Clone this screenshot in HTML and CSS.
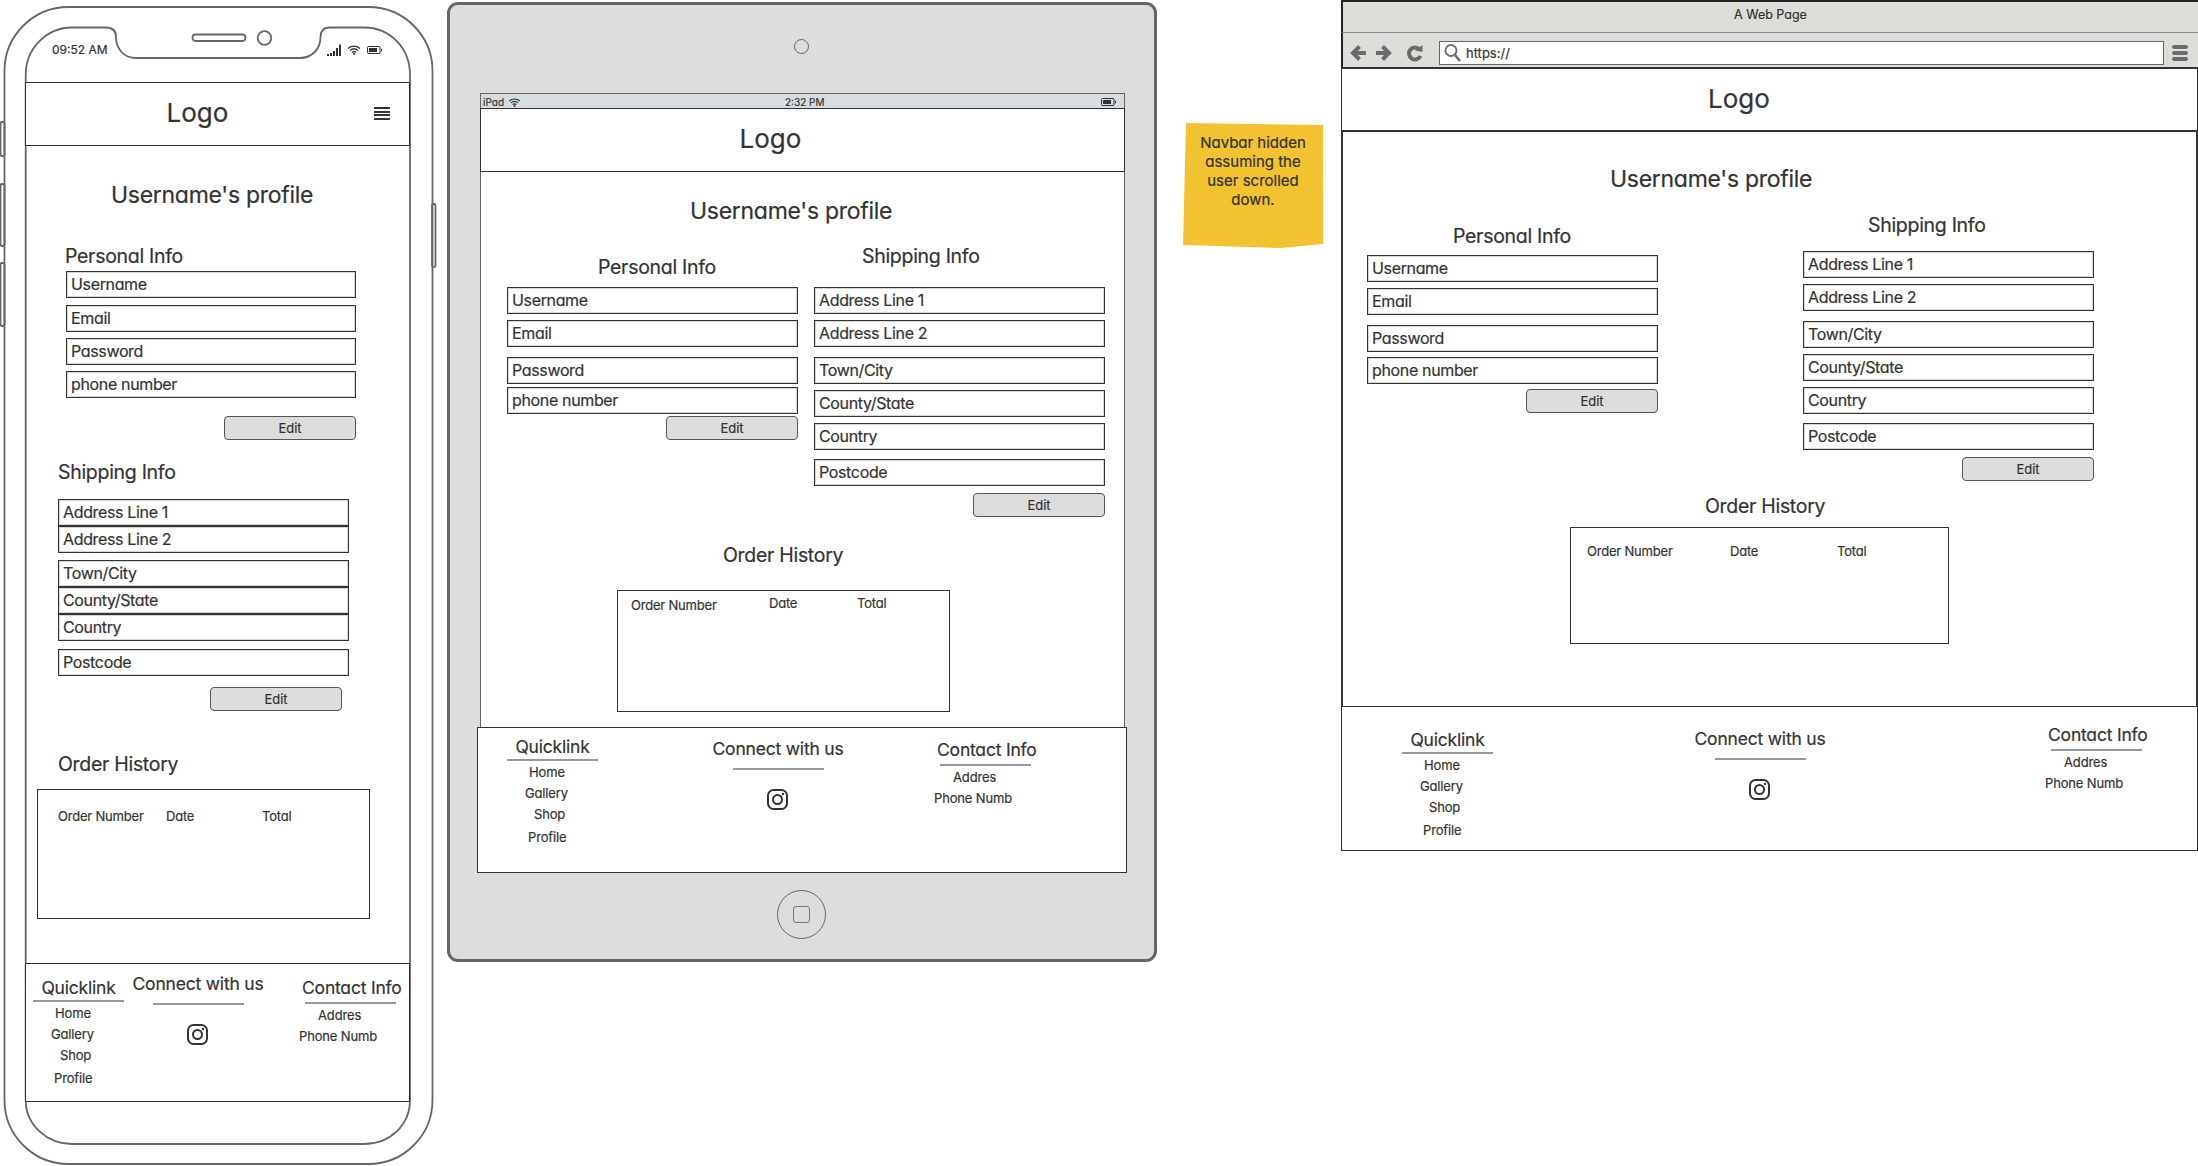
FILE: index.html
```html
<!doctype html>
<html>
  <head>
    <meta charset="utf-8">
    <title>Profile page wireframes</title>
    <link rel="stylesheet" href="styles.css">
  </head>
  <body>
    <svg class="icon-defs" aria-hidden="true">
      <symbol id="insta" viewBox="0 0 21 21">
        <rect x="1" y="1" width="19" height="19" rx="5.5" fill="none" stroke="#333" stroke-width="2"/>
        <circle cx="10.5" cy="10.5" r="4.5" fill="none" stroke="#333" stroke-width="2"/>
        <circle cx="16" cy="5" r="1.2" fill="#333"/>
      </symbol>
      <symbol id="wifi" viewBox="0 0 14 10">
        <path d="M1 3.4C4.5 0.4 9.5 0.4 13 3.4M3 5.4C5.4 3.4 8.6 3.4 11 5.4M5 7.4C6.2 6.4 7.8 6.4 9 7.4" fill="none" stroke="#333" stroke-width="1.3"/>
        <circle cx="7" cy="8.8" r="1.1" fill="#333"/>
      </symbol>
      <symbol id="battery" viewBox="0 0 15 8">
        <rect x="0.5" y="0.5" width="12.5" height="7" rx="1" fill="none" stroke="#333"/>
        <rect x="2" y="2" width="8" height="4" fill="#333"/>
        <path d="M14 2.5C14.8 3 14.8 5 14 5.5" fill="none" stroke="#333"/>
      </symbol>
    </svg>

    <!-- phone -->
    <section class="device phone">
      <svg class="shell" width="440" height="1166" viewBox="0 0 440 1166">
        <rect x="0.5" y="122" width="4" height="34" rx="1.5" class="shell-line"/>
        <rect x="0.5" y="184" width="4" height="62" rx="1.5" class="shell-line"/>
        <rect x="0.5" y="263" width="4" height="63" rx="1.5" class="shell-line"/>
        <rect x="432" y="204" width="3.5" height="63" rx="1.5" class="shell-line"/>
        <rect x="4.5" y="7" width="428" height="1157" rx="64" class="shell-line"/>
        <path class="shell-line" d="M25.7 1100V75C25.7 48 47 27.5 72 27.5H106C113 27.5 116 31 116 37C116 49 124 58 136 58H300C312 58 320.5 49 320.5 37C320.5 31 323 27.5 330 27.5H364C390 27.5 410 48 410 75V1100C410 1125 390 1144 364 1144H72C47 1144 25.7 1125 25.7 1100Z"/>
        <rect x="192.5" y="34.5" width="53" height="6.5" rx="3.2" class="shell-line"/>
        <circle cx="264.5" cy="38" r="6.8" class="shell-line"/>
        <g fill="#333">
          <rect x="327" y="54" width="2" height="2"/>
          <rect x="330" y="53" width="2" height="3"/>
          <rect x="333" y="51" width="2" height="5"/>
          <rect x="336" y="48" width="2" height="8"/>
          <rect x="339" y="44.500" width="2" height="11.500"/>
        </g>
      </svg>
      <span class="status-time">09:52 AM</span>
      <svg class="status-wifi"><use href="#wifi"/></svg>
      <svg class="status-battery"><use href="#battery"/></svg>

      <header class="nav">
        <span class="logo">Logo</span>
        <span class="burger"><i></i><i></i><i></i><i></i></span>
      </header>

      <h2 class="title">Username's profile</h2>
      <h3 class="heading personal-title">Personal Info</h3>
      <div class="fields personal">
        <div class="field">Username</div>
        <div class="field gap-7">Email</div>
        <div class="field gap-6">Password</div>
        <div class="field gap-6">phone number</div>
        <button class="edit gap-18">Edit</button>
      </div>

      <h3 class="heading shipping-title">Shipping Info</h3>
      <div class="fields shipping">
        <div class="field">Address Line 1</div>
        <div class="field">Address Line 2</div>
        <div class="field gap-7">Town/City</div>
        <div class="field">County/State</div>
        <div class="field">Country</div>
        <div class="field gap-8">Postcode</div>
        <button class="edit edit-inset gap-11">Edit</button>
      </div>

      <h3 class="heading orders-title">Order History</h3>
      <div class="orders">
        <span>Order Number</span><span>Date</span><span>Total</span>
      </div>

      <footer class="foot">
        <div class="quick">
          <h4 class="foot-head">Quicklink</h4>
          <ul class="links"><li>Home</li><li>Gallery</li><li>Shop</li><li>Profile</li></ul>
        </div>
        <div class="connect">
          <h4>Connect with us</h4>
          <i class="rule"></i>
          <svg class="insta"><use href="#insta"/></svg>
        </div>
        <div class="contact">
          <h4 class="foot-head">Contact Info</h4>
          <p class="addr">Addres</p>
          <p class="tel">Phone Numb</p>
        </div>
      </footer>
    </section>

    <!-- tablet -->
    <section class="device tablet">
      <div class="tablet-body"></div>
      <i class="tablet-cam"></i>
      <div class="tablet-screen"></div>
      <div class="tablet-status">
        <span>iPad</span>
        <svg class="tablet-wifi"><use href="#wifi"/></svg>
        <span class="tablet-clock">2:32 PM</span>
        <svg class="tablet-battery"><use href="#battery"/></svg>
      </div>
      <i class="tablet-home"><i></i></i>

      <header class="nav">
        <span class="logo">Logo</span>
      </header>

      <h2 class="title">Username's profile</h2>
      <h3 class="heading personal-title">Personal Info</h3>
      <div class="fields personal">
        <div class="field">Username</div>
        <div class="field gap-6">Email</div>
        <div class="field gap-10">Password</div>
        <div class="field gap-3">phone number</div>
        <button class="edit gap-2">Edit</button>
      </div>

      <h3 class="heading shipping-title">Shipping Info</h3>
      <div class="fields shipping">
        <div class="field">Address Line 1</div>
        <div class="field gap-6">Address Line 2</div>
        <div class="field gap-10">Town/City</div>
        <div class="field gap-6">County/State</div>
        <div class="field gap-6">Country</div>
        <div class="field gap-9">Postcode</div>
        <button class="edit gap-7">Edit</button>
      </div>

      <h3 class="heading orders-title">Order History</h3>
      <div class="orders">
        <span>Order Number</span><span>Date</span><span>Total</span>
      </div>

      <footer class="foot">
        <div class="quick">
          <h4 class="foot-head">Quicklink</h4>
          <ul class="links"><li>Home</li><li>Gallery</li><li>Shop</li><li>Profile</li></ul>
        </div>
        <div class="connect">
          <h4>Connect with us</h4>
          <i class="rule"></i>
          <svg class="insta"><use href="#insta"/></svg>
        </div>
        <div class="contact">
          <h4 class="foot-head">Contact Info</h4>
          <p class="addr">Addres</p>
          <p class="tel">Phone Numb</p>
        </div>
      </footer>
    </section>

    <!-- sticky note -->
    <aside class="sticky">
      <p>Navbar hidden assuming the user scrolled down.</p>
    </aside>

    <!-- browser -->
    <section class="device browser">
      <div class="win-title">A Web Page</div>
      <div class="win-bar">
        <svg class="win-nav" width="74" height="18" viewBox="0 0 74 18">
          <g fill="none" stroke="#6b6b6b" stroke-width="4">
            <path d="M16 9H3M9.500 2.500L3 9L9.500 15.500"/>
            <path d="M26 9H39M32.500 2.500L39 9L32.500 15.500"/>
            <path d="M69.500 5.500A6 6 0 1 0 70.500 12"/>
          </g>
          <path d="M65 6.500L72.500 1V8Z" fill="#6b6b6b"/>
        </svg>
        <div class="win-url">
          <svg class="win-search" width="18" height="20" viewBox="0 0 18 20">
            <circle cx="7" cy="7.500" r="5.500" fill="none" stroke="#6b6b6b" stroke-width="1.800"/>
            <path d="M11 12L16 18" stroke="#6b6b6b" stroke-width="2.600"/>
          </svg>
          <span>https://</span>
        </div>
        <span class="win-menu"><i></i><i></i><i></i></span>
      </div>

      <header class="nav">
        <span class="logo">Logo</span>
      </header>
      <div class="page"></div>

      <h2 class="title">Username's profile</h2>
      <h3 class="heading personal-title">Personal Info</h3>
      <div class="fields personal">
        <div class="field">Username</div>
        <div class="field gap-6">Email</div>
        <div class="field gap-10">Password</div>
        <div class="field gap-5">phone number</div>
        <button class="edit gap-5">Edit</button>
      </div>

      <h3 class="heading shipping-title">Shipping Info</h3>
      <div class="fields shipping">
        <div class="field">Address Line 1</div>
        <div class="field gap-6">Address Line 2</div>
        <div class="field gap-10">Town/City</div>
        <div class="field gap-6">County/State</div>
        <div class="field gap-6">Country</div>
        <div class="field gap-9">Postcode</div>
        <button class="edit gap-7">Edit</button>
      </div>

      <h3 class="heading orders-title">Order History</h3>
      <div class="orders">
        <span>Order Number</span><span>Date</span><span>Total</span>
      </div>

      <footer class="foot">
        <div class="quick">
          <h4 class="foot-head">Quicklink</h4>
          <ul class="links"><li>Home</li><li>Gallery</li><li>Shop</li><li>Profile</li></ul>
        </div>
        <div class="connect">
          <h4>Connect with us</h4>
          <i class="rule"></i>
          <svg class="insta"><use href="#insta"/></svg>
        </div>
        <div class="contact">
          <h4 class="foot-head">Contact Info</h4>
          <p class="addr">Addres</p>
          <p class="tel">Phone Numb</p>
        </div>
      </footer>
    </section>
  </body>
</html>
```

FILE: styles.css
```css
html, body {
  margin: 0;
  padding: 0;
}
body {
  position: relative;
  width: 2198px;
  height: 1166px;
  overflow: hidden;
  background: #fff;
  color: #333;
  font-family: "Inter", "Noto Sans", sans-serif;
  font-feature-settings: "cv11";
  -webkit-text-stroke: 0.2px #333;
}
h2, h3, h4, p, ul {
  margin: 0;
  padding: 0;
  font-weight: 400;
}
ul {
  list-style: none;
}
i {
  display: block;
}
.icon-defs {
  position: absolute;
  width: 0;
  height: 0;
}

/* each device sits on the free canvas, widgets are placed inside it */
.device {
  position: absolute;
  top: 0;
  height: 1166px;
}
.phone { left: 0; width: 440px; }
.tablet { left: 440px; width: 740px; }
.browser { left: 1330px; width: 868px; }

/* shared widgets */
.nav {
  position: absolute;
  box-sizing: border-box;
  display: flex;
  align-items: center;
  justify-content: center;
  border: 1px solid #333;
  background: #fff;
}
.logo {
  font-size: 26px;
  line-height: 32px;
  margin-top: -2px;
}
.title, .heading {
  position: absolute;
  white-space: nowrap;
  line-height: 24px;
}
.title {
  font-size: 23px;
  letter-spacing: -0.28px;
}
.heading {
  font-size: 19.5px;
  letter-spacing: -0.3px;
}
.fields {
  position: absolute;
  width: 291px;
  display: flex;
  flex-direction: column;
}
.field {
  box-sizing: border-box;
  height: 27px;
  padding-left: 4px;
  border: 1px solid #333;
  box-shadow: inset 0 0 0 1px rgba(51, 51, 51, 0.2);
  background: #fff;
  font-size: 16px;
  letter-spacing: -0.35px;
  line-height: 24px;
}
.edit {
  align-self: flex-end;
  box-sizing: border-box;
  width: 132px;
  height: 24px;
  padding: 0;
  border: 1px solid #555;
  border-radius: 4px;
  background: #ddd;
  color: #333;
  font-family: inherit;
  font-feature-settings: inherit;
  font-size: 13px;
}
.edit-inset { margin-right: 7px; }
.gap-2 { margin-top: 2px; }
.gap-3 { margin-top: 3px; }
.gap-5 { margin-top: 5px; }
.gap-6 { margin-top: 6px; }
.gap-7 { margin-top: 7px; }
.gap-8 { margin-top: 8px; }
.gap-9 { margin-top: 9px; }
.gap-10 { margin-top: 10px; }
.gap-11 { margin-top: 11px; }
.gap-18 { margin-top: 18px; }

.orders {
  position: absolute;
  box-sizing: border-box;
  display: flex;
  border: 1px solid #333;
  background: #fff;
  font-size: 13px;
  letter-spacing: -0.2px;
  line-height: 18px;
}

.foot {
  position: absolute;
  box-sizing: border-box;
  border: 1px solid #333;
  background: #fff;
  font-size: 13px;
  letter-spacing: -0.15px;
  line-height: 20px;
}
.quick, .connect, .contact {
  position: absolute;
  width: 91px;
}
.foot h4 {
  box-sizing: border-box;
  font-size: 17.5px;
  letter-spacing: -0.2px;
  line-height: 24px;
  white-space: nowrap;
}
.quick .foot-head {
  height: 26px;
  border-bottom: 2px solid #999;
  text-align: center;
}
.contact .foot-head {
  height: 28px;
  padding: 0 0 4px 0;
  border-bottom: 2px solid #999;
  text-indent: -3px;
}
.links {
  margin-top: 1px;
  white-space: nowrap;
}
.links li:nth-child(1) { margin-left: 22px; }
.links li:nth-child(2) { margin-left: 18px; margin-top: 1px; }
.links li:nth-child(3) { margin-left: 27px; margin-top: 1px; }
.links li:nth-child(4) { margin-left: 21px; margin-top: 3px; }
.connect {
  width: 130px;
  display: flex;
  flex-direction: column;
  align-items: center;
}
.rule {
  width: 91px;
  height: 2px;
  margin-top: 7px;
  background: #999;
}
.insta {
  width: 21px;
  height: 21px;
  margin-top: 19px;
  margin-right: 1px;
}
.addr {
  margin: 1px 0 0 13px;
  white-space: nowrap;
}
.tel {
  margin: 1px 0 0 -6px;
  white-space: nowrap;
}

/* phone */
.shell {
  position: absolute;
  left: 0;
  top: 0;
}
.shell-line {
  fill: none;
  stroke: #666;
  stroke-width: 1.8;
}
.status-time {
  position: absolute;
  left: 52px;
  top: 40px;
  font-size: 12px;
  line-height: 20px;
}
.status-wifi {
  position: absolute;
  left: 347px;
  top: 45px;
  width: 14px;
  height: 10px;
}
.status-battery {
  position: absolute;
  left: 367px;
  top: 46px;
  width: 15px;
  height: 8px;
}
.phone .nav { left: 25px; top: 82px; width: 385px; height: 64px; padding-right: 40px; }
.burger {
  position: absolute;
  left: 348px;
  top: 24px;
  width: 16px;
}
.burger i {
  height: 2px;
  margin-bottom: 1.500px;
  background: #333;
}
.phone .title { left: 111px; top: 183px; }
.phone .personal-title { left: 65px; top: 244px; }
.phone .personal { left: 66px; top: 271px; width: 290px; }
.phone .shipping-title { left: 58px; top: 460px; }
.phone .shipping { left: 58px; top: 499px; }
.phone .orders-title { left: 58px; top: 752px; }
.phone .orders { left: 37px; top: 789px; width: 333px; height: 130px; padding: 17px 0 0 20px; }
.phone .orders span:nth-child(1) { width: 108px; }
.phone .orders span:nth-child(2) { width: 96px; }
.phone .foot { left: 25px; top: 963px; width: 385px; height: 139px; }
.phone .quick { left: 7px; top: 12px; }
.phone .connect { left: 107px; top: 8px; }
.phone .contact { left: 279px; top: 12px; }

/* tablet */
.tablet-body {
  position: absolute;
  left: 7px;
  top: 2px;
  box-sizing: border-box;
  width: 710px;
  height: 960px;
  border: 3px solid #666;
  border-radius: 11px;
  background: #ddd;
}
.tablet-cam {
  position: absolute;
  left: 354px;
  top: 39px;
  box-sizing: border-box;
  width: 15px;
  height: 15px;
  border: 1px solid #666;
  border-radius: 50%;
}
.tablet-screen {
  position: absolute;
  left: 40px;
  top: 93px;
  box-sizing: border-box;
  width: 645px;
  height: 640px;
  border: 1px solid #666;
  background: #fff;
}
.tablet-status {
  position: absolute;
  left: 41px;
  top: 94px;
  display: flex;
  align-items: center;
  width: 643px;
  height: 14px;
  padding: 2px 0 0 2px;
  box-sizing: border-box;
  background: #d6dde0;
  font-size: 10px;
  line-height: 12px;
}
.tablet-wifi {
  width: 13px;
  height: 9px;
  margin-left: 4px;
}
.tablet-clock {
  position: absolute;
  left: 304px;
}
.tablet-battery {
  position: absolute;
  left: 620px;
  top: 4px;
  width: 15px;
  height: 8px;
}
.tablet-home {
  position: absolute;
  left: 337px;
  top: 890px;
  box-sizing: border-box;
  width: 49px;
  height: 49px;
  padding: 15px;
  border: 1px solid #666;
  border-radius: 50%;
}
.tablet-home i {
  width: 17px;
  height: 17px;
  box-sizing: border-box;
  border: 1.500px solid #777;
  border-radius: 3px;
}
.tablet .nav { left: 40px; top: 108px; width: 645px; height: 64px; padding-right: 64px; }
.tablet .title { left: 250px; top: 199px; }
.tablet .personal-title { left: 158px; top: 255px; }
.tablet .personal { left: 67px; top: 287px; }
.tablet .shipping-title { left: 422px; top: 244px; }
.tablet .shipping { left: 374px; top: 287px; }
.tablet .orders-title { left: 283px; top: 543px; }
.tablet .orders { left: 177px; top: 590px; width: 333px; height: 122px; padding: 3px 0 0 13px; }
.tablet .orders span:nth-child(1) { width: 138px; margin-top: 2px; }
.tablet .orders span:nth-child(2) { width: 88px; }
.tablet .foot { left: 37px; top: 727px; width: 650px; height: 146px; }
.tablet .quick { left: 29px; top: 7px; }
.tablet .connect { left: 235px; top: 9px; }
.tablet .contact { left: 462px; top: 10px; }

/* sticky note */
.sticky {
  position: absolute;
  left: 1183px;
  top: 123px;
  box-sizing: border-box;
  width: 140px;
  height: 125px;
  padding: 10px 12px 0 12px;
  background: #f2c230;
  clip-path: polygon(3px 0, 100% 2px, 100% 121px, 70% 100%, 0 122px);
  text-align: center;
  font-size: 15px;
  line-height: 19px;
}

/* browser */
.win-title {
  position: absolute;
  left: 11px;
  top: 0;
  box-sizing: border-box;
  width: 857px;
  height: 33px;
  border-top: 2px solid #222;
  border-left: 2px solid #222;
  border-bottom: 1px solid #888;
  background: #ddddda;
  text-align: center;
  font-size: 12.500px;
  line-height: 26px;
}
.win-bar {
  position: absolute;
  left: 11px;
  top: 33px;
  box-sizing: border-box;
  width: 857px;
  height: 36px;
  border-left: 2px solid #222;
  border-bottom: 2px solid #333;
  background: #ddddda;
}
.win-nav {
  position: absolute;
  left: 7px;
  top: 11px;
}
.win-url {
  position: absolute;
  left: 96px;
  top: 8px;
  box-sizing: border-box;
  display: flex;
  align-items: center;
  width: 725px;
  height: 24px;
  padding-left: 4px;
  border: 1px solid #666;
  background: #fff;
  font-size: 13px;
}
.win-search {
  margin-right: 4px;
}
.win-menu {
  position: absolute;
  left: 829px;
  top: 12px;
  width: 16px;
}
.win-menu i {
  height: 4px;
  margin-bottom: 2px;
  border-radius: 2px;
  background: #6b6b6b;
}
.browser .nav {
  left: 11px;
  top: 69px;
  width: 857px;
  height: 63px;
  padding-right: 61px;
  border-width: 0 1px 2px 1px;
}
.page {
  position: absolute;
  left: 11px;
  top: 132px;
  box-sizing: border-box;
  width: 857px;
  height: 575px;
  border-left: 2px solid #333;
  border-right: 2px solid #333;
}
.browser .title { left: 280px; top: 167px; }
.browser .personal-title { left: 123px; top: 224px; }
.browser .personal { left: 37px; top: 255px; }
.browser .shipping-title { left: 538px; top: 213px; }
.browser .shipping { left: 473px; top: 251px; }
.browser .orders-title { left: 375px; top: 494px; }
.browser .orders { left: 240px; top: 527px; width: 379px; height: 117px; padding: 14px 0 0 16px; }
.browser .orders span:nth-child(1) { width: 143px; }
.browser .orders span:nth-child(2) { width: 107px; }
.browser .foot { left: 11px; top: 706px; width: 857px; height: 145px; }
.browser .quick { left: 60px; top: 21px; }
.browser .connect { left: 353px; top: 20px; }
.browser .contact { left: 709px; top: 16px; }
```
